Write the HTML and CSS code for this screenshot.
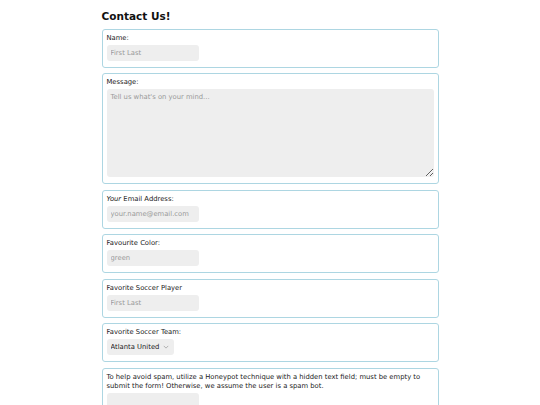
FILE: index.html
```html
<!DOCTYPE html>
<html lang="en">
<head>
  <meta charset="UTF-8">
  <title>Contact Us</title>
  <link rel="stylesheet" href="styles.css">
</head>
<body>
  <main class="main">
    <h1 class="title">Contact Us!</h1>
    <form class="contact-form">
      <div class="field">
        <label class="label" for="name">Name:</label>
        <input type="text" id="name" class="input" placeholder="First Last">
      </div>
      <div class="field">
        <label class="label" for="message">Message:</label>
        <textarea id="message" class="textarea" placeholder="Tell us what's on your mind..."></textarea>
      </div>
      <div class="field">
        <label class="label" for="email"><em>Your</em> Email Address:</label>
        <input type="email" id="email" class="input" placeholder="your.name@email.com">
      </div>
      <div class="field">
        <label class="label" for="color">Favourite Color:</label>
        <input type="text" id="color" class="input" placeholder="green">
      </div>
      <div class="field">
        <label class="label" for="player">Favorite Soccer Player</label>
        <input type="text" id="player" class="input" placeholder="First Last">
      </div>
      <div class="field">
        <label class="label" for="team">Favorite Soccer Team:</label>
        <div class="select-wrap">
          <select id="team" class="select">
            <option>Atlanta United</option>
          </select>
          <svg class="chevron" viewBox="0 0 8 5" width="6" height="4"><path d="M1 1l3 3 3-3" fill="none" stroke="#888" stroke-width="0.8"/></svg>
        </div>
      </div>
      <div class="field">
        <label class="label" for="honeypot">To help avoid spam, utilize a Honeypot technique with a hidden text field; must be empty to submit the form! Otherwise, we assume the user is a spam bot.</label>
        <input type="text" id="honeypot" class="input">
      </div>
    </form>
  </main>
</body>
</html>
```

FILE: styles.css
```css
* {
  box-sizing: border-box;
}

body {
  margin: 0;
  font-family: "DejaVu Sans", sans-serif;
  color: #111;
  background: #fff;
}

.main {
  width: 337px;
  margin: 0 auto;
  padding-top: 10px;
}

.title {
  font-size: 10.5px;
  font-weight: bold;
  margin: 0 0 6.5px;
}

.contact-form {
  display: flex;
  flex-direction: column;
  gap: 5.5px;
}

.field {
  display: flex;
  flex-direction: column;
  align-items: flex-start;
  gap: 2px;
  border: 1px solid #add6e2;
  border-radius: 3px;
  padding: 4px 4px 6px;
}

.label {
  font-size: 6.8px;
  line-height: 9px;
  color: #222;
}

.label em {
  font-style: italic;
}

.input {
  display: block;
  width: 92px;
  height: 16px;
  border: none;
  border-radius: 3px;
  background: #eee;
  font: inherit;
  font-size: 6.8px;
  padding: 0 4px;
  outline: none;
}

.input::placeholder,
.textarea::placeholder {
  color: #999;
}

.textarea {
  display: block;
  width: 100%;
  height: 88px;
  border: none;
  border-radius: 3px;
  background: #eee;
  font: inherit;
  font-size: 6.8px;
  padding: 4px;
  outline: none;
}

.select-wrap {
  position: relative;
  display: flex;
}

.select {
  appearance: none;
  height: 16px;
  border: none;
  border-radius: 3px;
  background: #eee;
  font: inherit;
  font-size: 6.8px;
  color: #222;
  padding: 0 14px 0 4px;
}

.chevron {
  position: absolute;
  right: 5px;
  top: 6px;
}
```
